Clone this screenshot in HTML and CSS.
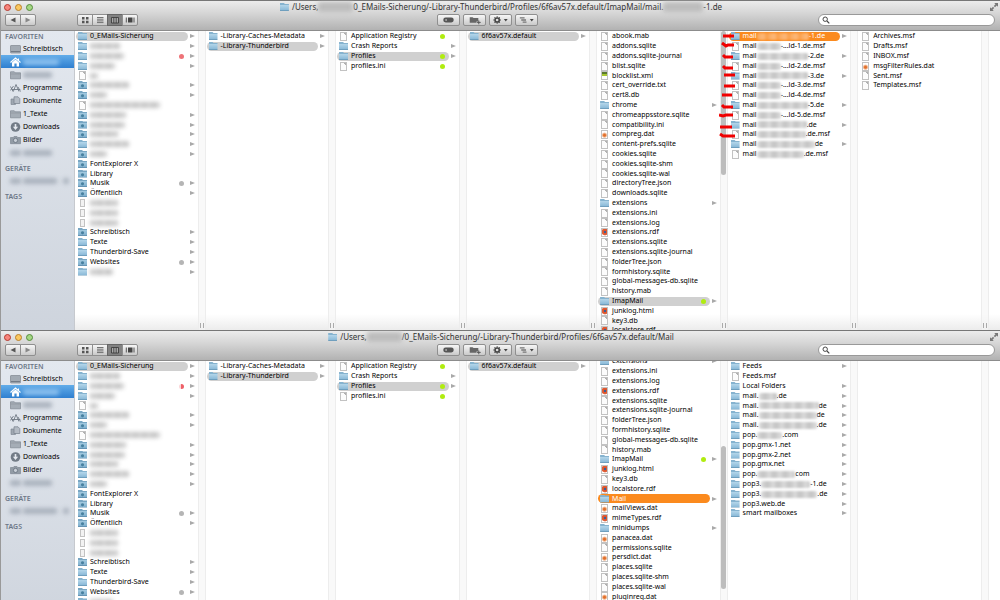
FILE: index.html
```html
<!DOCTYPE html>
<html lang="de">
<head>
<meta charset="utf-8">
<title>Finder</title>
<link rel="stylesheet" href="styles.css">
</head>
<body>
<svg class="defs" aria-hidden="true">
  <symbol id="back" viewBox="0 0 14 10"><path d="M9.5 2.5v5L4.500 5z" fill="#555"/></symbol>
  <symbol id="fwd" viewBox="0 0 14 10"><path d="M4.500 2.500v5L9.500 5z" fill="#888"/></symbol>
  <symbol id="grid" viewBox="0 0 14 10"><path d="M4 2h2.500v2.500H4zM8 2h2.500v2.500H8zM4 5.800h2.500v2.500H4zM8 5.800h2.500v2.500H8z" fill="#555"/></symbol>
  <symbol id="rows" viewBox="0 0 14 10"><path d="M4 2.500h6.500M4 4.200h6.500M4 5.900h6.500M4 7.600h6.500" stroke="#555" stroke-width=".8"/></symbol>
  <symbol id="cols" viewBox="0 0 14 10"><path d="M3.500 2.500h7v5.500h-7zM5.800 2.500v5.500M8.200 2.500v5.500" stroke="#333" stroke-width=".8" fill="#aaa"/></symbol>
  <symbol id="flow" viewBox="0 0 14 10"><path d="M5 2.500h4.500v5H5z" fill="#444"/><path d="M3.300 2.500v5M11 2.500v5" stroke="#555"/></symbol>
  <symbol id="pill" viewBox="0 0 22 10"><rect x="5.500" y="2.500" width="11" height="5" rx="2.500" fill="#555"/><circle cx="8.500" cy="5" r="1" fill="#aaa"/></symbol>
  <symbol id="newf" viewBox="0 0 22 10"><path d="M6 2h3l1 1h5v3.500h-2v1.500H6z" fill="#666"/><path d="M15.500 5.500v4M13.500 7.500h4" stroke="#555"/></symbol>
  <symbol id="gear" viewBox="0 0 22 10"><circle cx="7.500" cy="5" r="2.200" fill="none" stroke="#444" stroke-width="1.600"/><path d="M7.500 1v1.500M7.500 7.500V9M3.500 5H5M10 5h1.500M4.700 2.200l1 1M9.300 6.800l1 1M10.300 2.200l-1 1M5.700 6.800l-1 1" stroke="#444" stroke-width="1.100"/><path d="M14.500 4h4l-2 2.500z" fill="#444"/></symbol>
  <symbol id="arr" viewBox="0 0 22 10"><path d="M4 2h5v1.500H4zM5.500 4.300h5v1.400h-5zM7 6.500h4V8H7z" fill="#777"/><path d="M14.500 4h4l-2 2.500z" fill="#444"/></symbol>
  <symbol id="lens" viewBox="0 0 8 8"><circle cx="3.200" cy="3.200" r="2.200" fill="none" stroke="#444"/><path d="M5 5l2.300 2.300" stroke="#444" stroke-width="1.200"/></symbol>
  <symbol id="full" viewBox="0 0 8 8"><path d="M4.200 0H8v3.800L6.700 2.500 5 4.200 3.800 3 5.500 1.300zM0 4.200l1.300 1.300L3 3.800 4.200 5 2.500 6.700 3.800 8H0z" fill="#777"/></symbol>
  <symbol id="s-desk" viewBox="0 0 11 10"><rect x=".5" y="1.500" width="10" height="7.500" rx=".6" fill="#a3abb4" stroke="#7f8791" stroke-width=".7"/><path d="M1 7.500h9" stroke="#727b86"/></symbol>
  <symbol id="s-home" viewBox="0 0 11 10"><path d="M.5 5.500L5.500 1l5 4.500M8.500 1.500v2" fill="none" stroke="#fff" stroke-width="1.100"/><path d="M2 5.500l3.500-3 3.500 3V9.500H6.600V6.500H4.400v3H2z" fill="#fff"/></symbol>
  <symbol id="s-fold" viewBox="0 0 11 10"><path d="M.5 8.800V1.800h3.800l.8 1h5.400v6z" fill="#a5adb6" stroke="#7f8791" stroke-width=".7"/><path d="M.5 4h10" stroke="#8a929c" stroke-width=".6"/></symbol>
  <symbol id="s-app" viewBox="0 0 11 10"><path d="M.3 7.500L3.500 3M.5 3.500L3 8.500M3.300 8.500L6 1.500l3 7M1.800 6.500h8.500M8 4l2.500 4.500" fill="none" stroke="#6f7883" stroke-width=".9"/></symbol>
  <symbol id="s-docs" viewBox="0 0 11 10"><path d="M1 3h4.500v5.500H1z" fill="#9fa7b1" stroke="#77808b" stroke-width=".6"/><path d="M4 .8h4l1.800 1.800V7.500H4z" fill="#b4bbc4" stroke="#77808b" stroke-width=".7"/></symbol>
  <symbol id="s-down" viewBox="0 0 11 10"><circle cx="5.500" cy="5" r="4.800" fill="#727b86"/><path d="M4.700 2h1.600v2.800h1.800L5.500 7.900 2.900 4.800h1.800z" fill="#e6eaf0"/></symbol>
  <symbol id="s-cam" viewBox="0 0 11 10"><path d="M.5 2.500h2.700l.8-1h3l.8 1h2.700v6.200H.5z" fill="#929ba5" stroke="#77808b" stroke-width=".6"/><circle cx="5.500" cy="5.400" r="2.100" fill="#c9cfd7" stroke="#66707c" stroke-width=".8"/></symbol>
</svg>

<main class="screen">
<section class="window" aria-label="ImapMail">
  <header class="bar">
    <div class="titlerow">
      <div class="lights"><button class="light red" aria-label="Schließen"></button><button class="light amber" aria-label="Minimieren"></button><button class="light green" aria-label="Zoomen"></button></div>
      <h1 class="title folder">/Users,<span class="smudge" style="width:35px"></span>0_EMails-Sicherung/-Library-Thunderbird/Profiles/6f6av57x.default/ImapMail/mail.<span class="smudge" style="width:40px"></span>-1.de</h1>
      <button class="expand" aria-label="Vollbild"><svg><use href="#full"/></svg></button>
    </div>
    <div class="tools">
      <div class="group"><button aria-label="Zurück"><svg><use href="#back"/></svg></button><button aria-label="Vorwärts"><svg><use href="#fwd"/></svg></button></div>
      <div class="group"><button aria-label="Symbole"><svg><use href="#grid"/></svg></button><button aria-label="Liste"><svg><use href="#rows"/></svg></button><button class="on" aria-label="Spalten"><svg><use href="#cols"/></svg></button><button aria-label="Cover Flow"><svg><use href="#flow"/></svg></button></div>
      <div class="actions"><button aria-label="Tags"><svg><use href="#pill"/></svg></button><button aria-label="Neuer Ordner"><svg><use href="#newf"/></svg></button><button aria-label="Aktionen"><svg><use href="#gear"/></svg></button><button aria-label="Ausrichten"><svg><use href="#arr"/></svg></button></div>
      <label class="search"><svg><use href="#lens"/></svg><input type="search" aria-label="Suchen"></label>
    </div>
  </header>
  <div class="body">
    <nav class="side">
      <h2>FAVORITEN</h2>
      <a href="#"><svg><use href="#s-desk"/></svg>Schreibtisch</a>
      <a href="#" class="current" aria-label="Benutzerordner"><svg><use href="#s-home"/></svg><span class="smudge" style="width:36px"></span></a>
      <a href="#" aria-label="Ordner"><svg><use href="#s-fold"/></svg><span class="smudge" style="width:29px"></span></a>
      <a href="#"><svg><use href="#s-app"/></svg>Programme</a>
      <a href="#"><svg><use href="#s-docs"/></svg>Dokumente</a>
      <a href="#"><svg><use href="#s-fold"/></svg>1_Texte</a>
      <a href="#"><svg><use href="#s-down"/></svg>Downloads</a>
      <a href="#"><svg><use href="#s-cam"/></svg>Bilder</a>
      <a href="#" aria-label="Ordner"><span class="smudge glyph"></span><span class="smudge" style="width:29px"></span></a>
      <h2>GERÄTE</h2>
      <a href="#" aria-label="Gerät"><span class="smudge glyph"></span><span class="smudge" style="width:34px"></span><span class="smudge eject"></span></a>
      <h2>TAGS</h2>
    </nav>
    <div class="columns">
      <div class="col"><ul>
        <li class="dir sel"><span class="folder">0_EMails-Sicherung</span></li>
        <li class="dir"><span class="folder"><i class="smudge" style="width:30px"></i></span></li>
        <li class="dir"><span class="folder"><i class="smudge" style="width:34px"></i><b class="tag rose"></b></span></li>
        <li class="dir"><span class="folder"><i class="smudge" style="width:25px"></i></span></li>
        <li><span class="doc"><i class="smudge" style="width:8px"></i></span></li>
        <li class="dir"><span class="folder mark"><i class="smudge" style="width:39px"></i></span></li>
        <li class="dir"><span class="folder mark"><i class="smudge" style="width:17px"></i></span></li>
        <li><span class="doc"><i class="smudge" style="width:70px"></i></span></li>
        <li class="dir"><span class="folder mark"><i class="smudge" style="width:36px"></i></span></li>
        <li class="dir"><span class="folder mark"><i class="smudge" style="width:35px"></i></span></li>
        <li class="dir"><span class="folder mark"><i class="smudge" style="width:28px"></i></span></li>
        <li class="dir"><span class="folder"><i class="smudge" style="width:39px"></i></span></li>
        <li class="dir"><span class="folder mark"><i class="smudge" style="width:17px"></i></span></li>
        <li><span class="folder mark">FontExplorer X</span></li>
        <li><span class="folder mark">Library</span></li>
        <li class="dir"><span class="folder mark">Musik<b class="tag grey"></b></span></li>
        <li class="dir"><span class="folder mark">Öffentlich</span></li>
        <li><span class="doc slim"><i class="smudge" style="width:28px"></i></span></li>
        <li><span class="doc slim"><i class="smudge" style="width:28px"></i></span></li>
        <li><span class="doc slim"><i class="smudge" style="width:28px"></i></span></li>
        <li class="dir"><span class="folder mark">Schreibtisch</span></li>
        <li class="dir"><span class="folder">Texte</span></li>
        <li class="dir"><span class="folder">Thunderbird-Save</span></li>
        <li class="dir"><span class="folder mark">Websites<b class="tag grey"></b></span></li>
        <li class="dir"><span class="folder"><i class="smudge" style="width:23px"></i></span></li>
      </ul><div class="gutter"></div></div>
      <div class="col"><ul>
        <li class="dir"><span class="folder">-Library-Caches-Metadata</span></li>
        <li class="dir sel"><span class="folder">-Library-Thunderbird</span></li>
      </ul><div class="gutter"></div></div>
      <div class="col"><ul>
        <li><span class="doc">Application Registry<b class="tag lime"></b></span></li>
        <li class="dir"><span class="folder">Crash Reports</span></li>
        <li class="dir sel"><span class="folder">Profiles<b class="tag lime"></b></span></li>
        <li><span class="doc">profiles.ini<b class="tag lime"></b></span></li>
      </ul><div class="gutter"></div></div>
      <div class="col"><ul>
        <li class="dir sel"><span class="folder">6f6av57x.default</span></li>
      </ul><div class="gutter"></div></div>
      <div class="col"><ul>
        <li><span class="doc">abook.mab</span></li>
        <li><span class="doc">addons.sqlite</span></li>
        <li><span class="doc">addons.sqlite-journal</span></li>
        <li><span class="doc">blist.sqlite</span></li>
        <li><span class="doc xml">blocklist.xml</span></li>
        <li><span class="doc">cert_override.txt</span></li>
        <li><span class="doc">cert8.db</span></li>
        <li class="dir"><span class="folder">chrome</span></li>
        <li><span class="doc">chromeappsstore.sqlite</span></li>
        <li><span class="doc">compatibility.ini</span></li>
        <li><span class="doc dat">compreg.dat</span></li>
        <li><span class="doc">content-prefs.sqlite</span></li>
        <li><span class="doc">cookies.sqlite</span></li>
        <li><span class="doc">cookies.sqlite-shm</span></li>
        <li><span class="doc">cookies.sqlite-wal</span></li>
        <li><span class="doc">directoryTree.json</span></li>
        <li><span class="doc">downloads.sqlite</span></li>
        <li class="dir"><span class="folder">extensions</span></li>
        <li><span class="doc">extensions.ini</span></li>
        <li><span class="doc">extensions.log</span></li>
        <li><span class="doc fox">extensions.rdf</span></li>
        <li><span class="doc">extensions.sqlite</span></li>
        <li><span class="doc">extensions.sqlite-journal</span></li>
        <li><span class="doc">folderTree.json</span></li>
        <li><span class="doc">formhistory.sqlite</span></li>
        <li><span class="doc">global-messages-db.sqlite</span></li>
        <li><span class="doc">history.mab</span></li>
        <li class="dir sel"><span class="folder">ImapMail<b class="tag lime"></b></span></li>
        <li><span class="doc fox">junklog.html</span></li>
        <li><span class="doc">key3.db</span></li>
        <li><span class="doc fox">localstore.rdf</span></li>
      </ul><div class="gutter"><div class="thumb upper"></div></div></div>
      <div class="col"><ul>
        <li class="dir active"><span class="folder">mail<i class="smudge wash" style="width:52px"></i>-1.de</span></li>
        <li><span class="doc">mail<i class="smudge wash" style="width:24px"></i>-...ld-1.de.msf</span></li>
        <li class="dir"><span class="folder">mail<i class="smudge wash" style="width:51px"></i>-2.de</span></li>
        <li><span class="doc">mail<i class="smudge wash" style="width:24px"></i>-...ld-2.de.msf</span></li>
        <li class="dir"><span class="folder">mail<i class="smudge wash" style="width:51px"></i>-3.de</span></li>
        <li><span class="doc">mail<i class="smudge wash" style="width:24px"></i>-...ld-3.de.msf</span></li>
        <li><span class="doc">mail<i class="smudge wash" style="width:24px"></i>-...ld-4.de.msf</span></li>
        <li class="dir"><span class="folder">mail<i class="smudge wash" style="width:51px"></i>-5.de</span></li>
        <li><span class="doc">mail<i class="smudge wash" style="width:24px"></i>-...ld-5.de.msf</span></li>
        <li class="dir"><span class="folder">mail<i class="smudge wash" style="width:50px"></i>.de</span></li>
        <li><span class="doc">mail<i class="smudge wash" style="width:49px"></i>.de.msf</span></li>
        <li class="dir"><span class="folder">mail<i class="smudge wash" style="width:58px"></i>de</span></li>
        <li><span class="doc">mail<i class="smudge wash" style="width:47px"></i>.de.msf</span></li>
      </ul><div class="gutter"></div>
        <svg class="strokes" viewBox="0 0 18 112" aria-hidden="true"><path d="M4 5h11M3 12l4 3 2-1h6M4 24l2 2h8M4 35l2 2h8M5 44h11M5 55h11M3 64h10M3 74l2 2h9M0 84l4 1 3-1h7M1 96h12M1 103l3 2h12" fill="none" stroke="#f00000" stroke-width="3"/></svg>
      </div>
      <div class="col"><ul>
        <li><span class="doc">Archives.msf</span></li>
        <li><span class="doc">Drafts.msf</span></li>
        <li><span class="doc">INBOX.msf</span></li>
        <li><span class="doc dat">msgFilterRules.dat</span></li>
        <li><span class="doc">Sent.msf</span></li>
        <li><span class="doc">Templates.msf</span></li>
      </ul><div class="gutter"></div></div>
    </div>
  </div>
</section>

<section class="window" aria-label="Mail">
  <header class="bar">
    <div class="titlerow">
      <div class="lights"><button class="light red" aria-label="Schließen"></button><button class="light amber" aria-label="Minimieren"></button><button class="light green" aria-label="Zoomen"></button></div>
      <h1 class="title folder">/Users,<span class="smudge" style="width:35px"></span>/0_EMails-Sicherung/-Library-Thunderbird/Profiles/6f6av57x.default/Mail</h1>
      <button class="expand" aria-label="Vollbild"><svg><use href="#full"/></svg></button>
    </div>
    <div class="tools">
      <div class="group"><button aria-label="Zurück"><svg><use href="#back"/></svg></button><button aria-label="Vorwärts"><svg><use href="#fwd"/></svg></button></div>
      <div class="group"><button aria-label="Symbole"><svg><use href="#grid"/></svg></button><button aria-label="Liste"><svg><use href="#rows"/></svg></button><button class="on" aria-label="Spalten"><svg><use href="#cols"/></svg></button><button aria-label="Cover Flow"><svg><use href="#flow"/></svg></button></div>
      <div class="actions"><button aria-label="Tags"><svg><use href="#pill"/></svg></button><button aria-label="Neuer Ordner"><svg><use href="#newf"/></svg></button><button aria-label="Aktionen"><svg><use href="#gear"/></svg></button><button aria-label="Ausrichten"><svg><use href="#arr"/></svg></button></div>
      <label class="search"><svg><use href="#lens"/></svg><input type="search" aria-label="Suchen"></label>
    </div>
  </header>
  <div class="body">
    <nav class="side">
      <h2>FAVORITEN</h2>
      <a href="#"><svg><use href="#s-desk"/></svg>Schreibtisch</a>
      <a href="#" class="current" aria-label="Benutzerordner"><svg><use href="#s-home"/></svg><span class="smudge" style="width:36px"></span></a>
      <a href="#" aria-label="Ordner"><svg><use href="#s-fold"/></svg><span class="smudge" style="width:29px"></span></a>
      <a href="#"><svg><use href="#s-app"/></svg>Programme</a>
      <a href="#"><svg><use href="#s-docs"/></svg>Dokumente</a>
      <a href="#"><svg><use href="#s-fold"/></svg>1_Texte</a>
      <a href="#"><svg><use href="#s-down"/></svg>Downloads</a>
      <a href="#"><svg><use href="#s-cam"/></svg>Bilder</a>
      <a href="#" aria-label="Ordner"><span class="smudge glyph"></span><span class="smudge" style="width:29px"></span></a>
      <h2>GERÄTE</h2>
      <a href="#" aria-label="Gerät"><span class="smudge glyph"></span><span class="smudge" style="width:34px"></span><span class="smudge eject"></span></a>
      <h2>TAGS</h2>
    </nav>
    <div class="columns">
      <div class="col"><ul>
        <li class="dir sel"><span class="folder">0_EMails-Sicherung</span></li>
        <li class="dir"><span class="folder"><i class="smudge" style="width:30px"></i></span></li>
        <li class="dir"><span class="folder"><i class="smudge" style="width:34px"></i><b class="tag rose half"></b></span></li>
        <li class="dir"><span class="folder"><i class="smudge" style="width:25px"></i></span></li>
        <li><span class="doc"><i class="smudge" style="width:8px"></i></span></li>
        <li class="dir"><span class="folder mark"><i class="smudge" style="width:39px"></i></span></li>
        <li class="dir"><span class="folder mark"><i class="smudge" style="width:17px"></i></span></li>
        <li><span class="doc"><i class="smudge" style="width:70px"></i></span></li>
        <li class="dir"><span class="folder mark"><i class="smudge" style="width:36px"></i></span></li>
        <li class="dir"><span class="folder mark"><i class="smudge" style="width:35px"></i></span></li>
        <li class="dir"><span class="folder mark"><i class="smudge" style="width:28px"></i></span></li>
        <li class="dir"><span class="folder"><i class="smudge" style="width:39px"></i></span></li>
        <li class="dir"><span class="folder mark"><i class="smudge" style="width:17px"></i></span></li>
        <li><span class="folder mark">FontExplorer X</span></li>
        <li><span class="folder mark">Library</span></li>
        <li class="dir"><span class="folder mark">Musik<b class="tag grey"></b></span></li>
        <li class="dir"><span class="folder mark">Öffentlich</span></li>
        <li><span class="doc slim"><i class="smudge" style="width:28px"></i></span></li>
        <li><span class="doc slim"><i class="smudge" style="width:28px"></i></span></li>
        <li><span class="doc slim"><i class="smudge" style="width:28px"></i></span></li>
        <li class="dir"><span class="folder mark">Schreibtisch</span></li>
        <li class="dir"><span class="folder">Texte</span></li>
        <li class="dir"><span class="folder">Thunderbird-Save</span></li>
        <li class="dir"><span class="folder mark">Websites<b class="tag grey"></b></span></li>
        <li class="dir"><span class="folder"><i class="smudge" style="width:23px"></i></span></li>
      </ul><div class="gutter"></div></div>
      <div class="col"><ul>
        <li class="dir"><span class="folder">-Library-Caches-Metadata</span></li>
        <li class="dir sel"><span class="folder">-Library-Thunderbird</span></li>
      </ul><div class="gutter"></div></div>
      <div class="col"><ul>
        <li><span class="doc">Application Registry<b class="tag lime"></b></span></li>
        <li class="dir"><span class="folder">Crash Reports</span></li>
        <li class="dir sel"><span class="folder">Profiles<b class="tag lime"></b></span></li>
        <li><span class="doc">profiles.ini<b class="tag lime"></b></span></li>
      </ul><div class="gutter"></div></div>
      <div class="col"><ul>
        <li class="dir sel"><span class="folder">6f6av57x.default</span></li>
      </ul><div class="gutter"></div></div>
      <div class="col"><ul class="scrolled">
        <li class="dir"><span class="folder">extensions</span></li>
        <li><span class="doc">extensions.ini</span></li>
        <li><span class="doc">extensions.log</span></li>
        <li><span class="doc fox">extensions.rdf</span></li>
        <li><span class="doc">extensions.sqlite</span></li>
        <li><span class="doc">extensions.sqlite-journal</span></li>
        <li><span class="doc">folderTree.json</span></li>
        <li><span class="doc">formhistory.sqlite</span></li>
        <li><span class="doc">global-messages-db.sqlite</span></li>
        <li><span class="doc">history.mab</span></li>
        <li class="dir"><span class="folder">ImapMail<b class="tag lime"></b></span></li>
        <li><span class="doc fox">junklog.html</span></li>
        <li><span class="doc">key3.db</span></li>
        <li><span class="doc fox">localstore.rdf</span></li>
        <li class="dir active"><span class="folder">Mail</span></li>
        <li><span class="doc dat">mailViews.dat</span></li>
        <li><span class="doc fox">mimeTypes.rdf</span></li>
        <li class="dir"><span class="folder">minidumps</span></li>
        <li><span class="doc dat">panacea.dat</span></li>
        <li><span class="doc">permissions.sqlite</span></li>
        <li><span class="doc dat">persdict.dat</span></li>
        <li><span class="doc">places.sqlite</span></li>
        <li><span class="doc">places.sqlite-shm</span></li>
        <li><span class="doc">places.sqlite-wal</span></li>
        <li><span class="doc dat">pluginreg.dat</span></li>
      </ul><div class="gutter"><div class="thumb lower"></div></div></div>
      <div class="col"><ul>
        <li class="dir"><span class="folder">Feeds</span></li>
        <li><span class="doc">Feeds.msf</span></li>
        <li class="dir"><span class="folder">Local Folders</span></li>
        <li class="dir"><span class="folder">mail.<i class="smudge wash" style="width:18px"></i>.de</span></li>
        <li class="dir"><span class="folder">mail.<i class="smudge wash" style="width:60px"></i>de</span></li>
        <li class="dir"><span class="folder">mail.<i class="smudge wash" style="width:58px"></i>de</span></li>
        <li class="dir"><span class="folder">mail.<i class="smudge wash" style="width:58px"></i>.de</span></li>
        <li class="dir"><span class="folder">pop.<i class="smudge wash" style="width:25px"></i>.com</span></li>
        <li class="dir"><span class="folder">pop.gmx-1.net</span></li>
        <li class="dir"><span class="folder">pop.gmx-2.net</span></li>
        <li class="dir"><span class="folder">pop.gmx.net</span></li>
        <li class="dir"><span class="folder">pop.<i class="smudge wash" style="width:38px"></i>com</span></li>
        <li class="dir"><span class="folder">pop3.<i class="smudge wash" style="width:49px"></i>-1.de</span></li>
        <li class="dir"><span class="folder">pop3.<i class="smudge wash" style="width:56px"></i>.de</span></li>
        <li class="dir"><span class="folder">pop3.web.de</span></li>
        <li class="dir"><span class="folder">smart mailboxes</span></li>
      </ul><div class="gutter"></div></div>
      <div class="col"><ul></ul><div class="gutter"></div></div>
    </div>
  </div>
</section>
</main>
</body>
</html>
```
FILE: styles.css
```css
*, *::before, *::after { box-sizing: border-box; }
body {
  margin: 0;
  font: 7px/10px "Noto Sans", "Open Sans", sans-serif;
  color: #000;
  background: #fff;
}
ul, h1, h2 { margin: 0; padding: 0; list-style: none; font-weight: normal; }
button { padding: 0; border: 0; background: none; display: block; }
svg { display: block; }
.defs { display: none; }

/* the lower window runs past the bottom of the screen */
.screen {
  display: grid;
  grid-template-rows: 55% 50%;
  height: 100vh;
  overflow: hidden;
}
.window {
  display: flex;
  flex-direction: column;
  min-height: 0;
  overflow: hidden;
  border-left: 1px solid #999;
}

/* title and tool bar */
.bar {
  flex: none;
  height: 31px;
  border-top: 1px solid #777;
  border-bottom: 1px solid #8c8c8c;
  background: linear-gradient(#ececec, #d4d4d4 45%, #b2b2b2);
}
.titlerow {
  display: grid;
  grid-template-columns: 1fr auto 1fr;
  align-items: center;
  height: 12px;
  padding: 0 2px 0 3px;
}
.lights { display: flex; gap: 4px; }
.light { width: 7px; height: 7px; border-radius: 50%; border: 1px solid; }
.light.red { background: #f8857c; border-color: #b5392f; }
.light.amber { background: #fbc860; border-color: #b9812a; }
.light.green { background: #a5d884; border-color: #568c3c; }
.title { display: flex; align-items: center; font-size: 8px; line-height: 12px; color: #333; }
.title .smudge { height: 10px; background: #bcbcbc; }
.expand { justify-self: end; }
.expand svg { width: 8px; height: 8px; }

.tools {
  display: grid;
  grid-template-columns: 72px 360fr 381fr 177px;
  padding: 1px 5px 0 4px;
  height: 13px;
}
.group { display: flex; justify-self: start; }
.group button, .actions button {
  height: 12px;
  border: 1px solid #8f8f8f;
  background: linear-gradient(#f6f6f6, #c9c9c9);
}
.group button { width: 16px; margin-right: -1px; }
.group button:first-child { border-radius: 2px 0 0 2px; }
.group button:last-child { border-radius: 0 2px 2px 0; margin-right: 0; }
.group button.on { background: #828282; border-color: #666; }
.group svg { width: 14px; height: 10px; }
.actions { display: flex; gap: 3px; }
.actions button { width: 23px; border-radius: 2px; }
.actions svg { width: 21px; height: 10px; }
.search {
  display: flex;
  align-items: center;
  height: 12px;
  padding-left: 3px;
  border: 1px solid #999;
  border-radius: 6px;
  background: #fff;
}
.search svg { flex: none; width: 8px; height: 8px; }
.search input {
  flex: 1;
  min-width: 0;
  height: 10px;
  padding: 0 3px;
  border: 0;
  outline: 0;
  background: none;
  font: inherit;
}

/* sidebar */
.body { flex: 1; display: flex; min-height: 0; overflow: hidden; }
.side {
  flex: none;
  width: 74px;
  border-right: 1px solid #c6c9ce;
  background: linear-gradient(#e3e8ef, #ced4dd);
}
.side h2 {
  margin-top: 4px;
  padding-left: 4px;
  font-size: 7px;
  line-height: 11px;
  font-weight: 600;
  color: #6c7787;
}
.side h2:first-child { margin-top: 0; }
.side a {
  display: flex;
  align-items: center;
  gap: 2px;
  height: 13px;
  padding-left: 9px;
  color: #000;
  text-decoration: none;
}
.side svg { flex: none; width: 11px; height: 10px; }
.side .current { background: linear-gradient(#62ade9, #2f7fd0); }
.side .smudge { background: #aab2bd; }
.side .current .smudge { background: #8cc0ee; }
.side .glyph { width: 11px; }
.side .eject { width: 6px; margin-left: 4px; }

/* column browser */
.columns {
  flex: 1;
  display: grid;
  grid-template-columns: repeat(7, 92fr) 8fr;
  min-width: 0;
  background: linear-gradient(to top, #ececec, #fff 16px);
}
.col { position: relative; display: flex; min-width: 0; min-height: 0; }
.col ul { flex: 1; min-width: 0; padding-left: 1px; }
.col ul.scrolled { margin-top: -5px; }
.gutter {
  flex: none;
  display: flex;
  flex-direction: column;
  align-items: center;
  width: 8px;
  border: solid #ededed;
  border-width: 0 1px;
  background: rgba(245, 245, 245, .6);
}
.gutter::after {
  content: "";
  width: 4px;
  height: 5px;
  margin: auto 0 2px;
  border: solid #aaa;
  border-width: 0 1px;
}
.thumb { width: 5px; border-radius: 3px; background: #bdbdbd; }
.thumb.upper { height: 48%; }
.thumb.lower { margin-top: 85px; height: 53%; }
.strokes { position: absolute; left: -9px; top: 0; width: 18px; height: 112px; }

.col li { display: flex; align-items: center; height: 10px; }
.col li:nth-child(5n) { height: 9px; }
.col li > span {
  flex: 1;
  display: flex;
  align-items: center;
  min-width: 0;
  height: 9px;
  padding-left: 2px;
  border-radius: 5px;
  white-space: nowrap;
}
.col li::after {
  content: "";
  width: 5px;
  margin: 0 3px 0 2px;
  border: solid transparent;
  border-width: 2px 0 2px 5px;
}
.col li.dir::after { border-left-color: #a9a9a9; }
.col li.sel > span { background: #d0d0d0; }
.col li.active > span { background: #fb8a1e; color: #fff; }

/* file and folder icons */
.folder::before {
  content: "";
  flex: none;
  width: 9px;
  height: 8px;
  margin-right: 3px;
  background: linear-gradient(#86b3cf 2px, #b4d6ea 2px, #8bbad8 7px, #6f9fbe 7px);
  clip-path: polygon(0 0, 4px 0, 5px 1px, 100% 1px, 100% 100%, 0 100%);
}
.folder.mark::before {
  background:
    radial-gradient(circle at 50% 60%, #47809f 1px, transparent 2px),
    linear-gradient(#78a6c3 2px, #a3cae0 2px, #80b1cf 7px, #6594b4 7px);
}
.doc::before {
  content: "";
  flex: none;
  width: 7px;
  height: 9px;
  margin: 0 4px 0 1px;
  border: 1px solid #c2c2c2;
  background: linear-gradient(225deg, #b0b0b0 2px, #fcfcfc 2px);
}
.doc.slim::before { width: 5px; height: 8px; margin: 0 5px 0 2px; background: #f2f2f2; }
.doc.dat::before { background: radial-gradient(circle at 50% 60%, #e0702c 1px, #f3b48c 2px, #fff 3px); }
.doc.fox::before { background: radial-gradient(circle at 60% 40%, #3b5f95 1px, #d9502a 1px, #e0603a 3px, #fff 4px); }
.doc.xml::before { background: linear-gradient(#5c7a2e 2px, #a8c832 2px, #a8c832 4px, #fff 4px); }

.tag { width: 5px; height: 5px; margin: 0 4px 0 auto; border-radius: 50%; }
.tag.lime { background: #b0ec10; }
.tag.rose { background: #ee7378; }
.tag.half { background: linear-gradient(to right, #fbd5d7 50%, #ee6068 50%); }
.tag.grey { background: #b5b5b5; }

/* unreadable names */
.smudge {
  flex: none;
  height: 6px;
  border-radius: 2px;
  background: repeating-linear-gradient(to right, #bbb 0, #d2d2d2 5px, #c0c0c0 9px);
  filter: blur(2px);
}
.smudge.wash {
  height: 7px;
  background: repeating-linear-gradient(to right, #ddd 0, #c4c4c4 6px, #d4d4d4 11px);
  filter: blur(1px);
}
.active .smudge.wash { background: repeating-linear-gradient(to right, #fba95c 0, #fcb87a 6px, #fb9a40 11px); }
```
